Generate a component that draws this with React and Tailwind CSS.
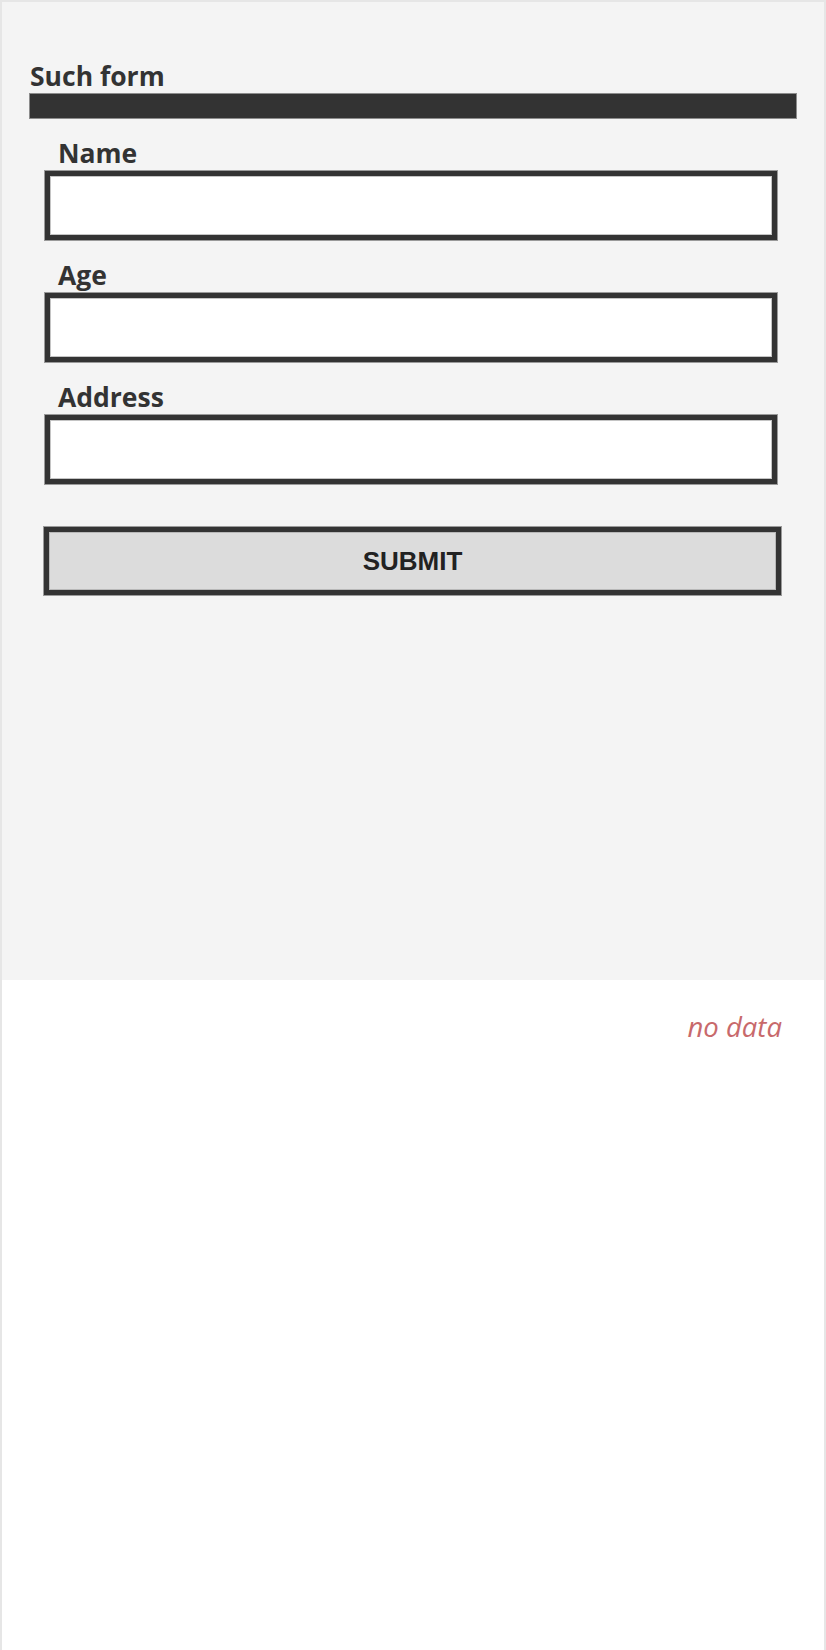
const fields = ['Name', 'Age', 'Address'];

const FieldInput = ({ label }) => (
  <div className="flex flex-col">
    <label className="ml-[28px] text-[26.5px] leading-[32px] font-bold text-[#333]">{label}</label>
    <input
      type="text"
      className="mt-[2px] ml-[15px] mr-[19px] h-[69px] border-[5px] border-[#333] bg-white outline outline-1 outline-[#9a9a9a] shadow-[inset_0_0_0_1px_#c4c4c4]"
    />
  </div>
);

export default function App() {
  return (
    <div
      className="w-[826px] h-[1650px] overflow-hidden border-x-2 border-t-2 border-[#e6e6e6] bg-white"
      style={{ fontFamily: '"Open Sans", "Noto Sans", sans-serif' }}
    >
      {/* Form panel */}
      <div className="h-[978px] bg-[#f4f4f4] px-[28px] pt-[58px]">
        <h2 className="text-[26.5px] leading-[32px] font-bold text-[#333]">Such form</h2>
        <div className="mt-[2px] h-[24px] bg-[#333] outline outline-1 outline-[#8c8c8c]" />

        <form className="mt-[19px] flex flex-col gap-[19px]" onSubmit={(e) => e.preventDefault()}>
          {fields.map((f) => (
            <FieldInput key={f} label={f} />
          ))}
          <button
            type="submit"
            className="mt-[24px] ml-[14px] mr-[15px] h-[68px] border-[5px] border-[#333] bg-[#dcdcdc] outline outline-1 outline-[#9a9a9a] shadow-[inset_0_0_0_1px_#b8b8b8] text-[26px] font-bold text-[#222]"
            style={{ fontFamily: '"Liberation Sans", Arial, sans-serif' }}
          >
            SUBMIT
          </button>
        </form>
      </div>

      {/* Results */}
      <div className="flex justify-end pt-[31px] pr-[42px]">
        <span className="text-[27.5px] leading-[32px] italic text-[#c8696b]">no data</span>
      </div>
    </div>
  );
}
